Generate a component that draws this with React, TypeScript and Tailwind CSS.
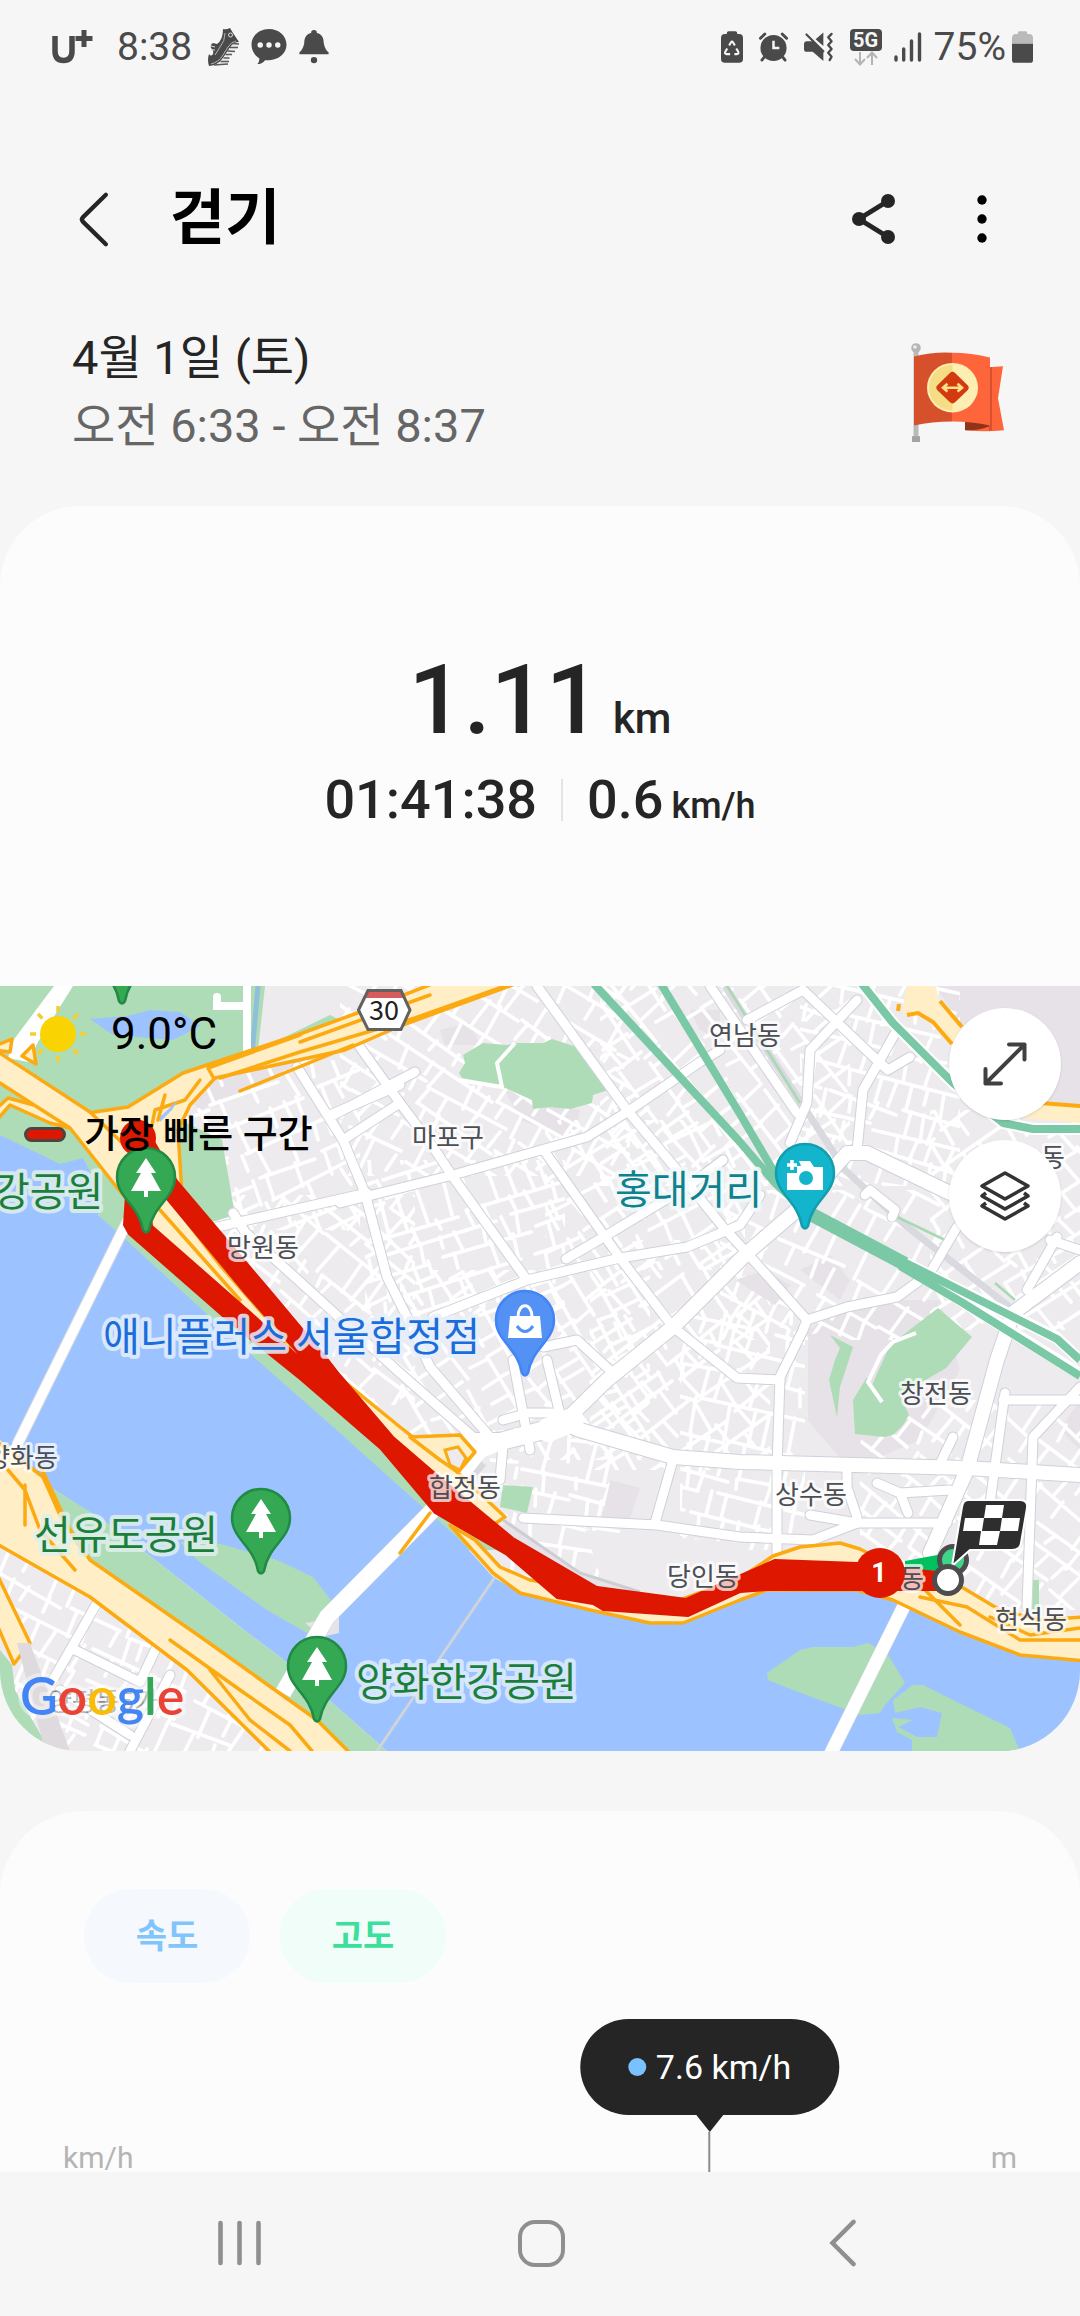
import React from "react";

const FONT = "font-[Roboto,'Noto_Sans_CJK_KR',sans-serif]";

/* ---------- status bar icons ---------- */

function ShoeIcon() {
  return (
    <svg className="h-[38px] w-[31px]" viewBox="0 0 31 38" aria-hidden="true">
      <path d="M15 1Q18 2 22 0L25 5L31 14Q24 15 21 21L15 30Q9 38 1 38Q-1 32 1 26Q3 29 5 26Q6 22 3 20Q2 16 5 15L9 16Q15 12 15 1z" fill="#4a4a4a" />
      <path d="M31 14Q32 18 28 22L21 28L20 36L3 38Q12 36 16 29L22 20Q25 14 31 14z" fill="#ededed" />
      <path d="M24 15.500L31 16M22 19.500H30M19.500 23L27 23.500M17.500 26.500H24M15.500 30H21.500M12.500 33.500H21M6 37L20 36" stroke="#5a5a5a" strokeWidth="1.500" />
      <path d="M3 36Q11 34 15 27L20 19Q23 14 28 13M17 5Q17 13 12 19L7 27" stroke="#bdbdbd" strokeWidth=".9" fill="none" />
      <circle cx="22.500" cy="7" r="2" fill="none" stroke="#dcdcdc" strokeWidth="1" />
      <path d="M3 18L7 19M3 22L7 22" stroke="#dcdcdc" strokeWidth="1" />
    </svg>
  );
}

function ChatIcon() {
  return (
    <svg className="h-[36px] w-[36px]" viewBox="0 0 36 37" aria-hidden="true">
      <path d="M18 0c10 0 18 7 18 16s-8 16-18 16c-2 0-3 0-4 0-2 3-5 4-8 4 2-2 2-4 2-6C3 27 0 22 0 16 0 7 8 0 18 0z" fill="#4a4a4a" />
      <circle cx="9" cy="16.500" r="2.800" fill="#f6f6f6" />
      <circle cx="18" cy="16.500" r="2.800" fill="#f6f6f6" />
      <circle cx="27" cy="16.500" r="2.800" fill="#f6f6f6" />
    </svg>
  );
}

function BellIcon() {
  return (
    <svg className="h-[34px] w-[30px]" viewBox="0 0 30 35" aria-hidden="true">
      <path d="M15 0c2 0 3 1 3 3 5 1 7 5 7 10 1 5 2 7 5 10v2H0v-2c3-3 4-5 5-10 0-5 2-9 7-10 0-2 1-3 3-3z" fill="#4a4a4a" />
      <circle cx="15" cy="31" r="3.300" fill="#4a4a4a" />
    </svg>
  );
}

function SaverIcon() {
  return (
    <svg className="h-[32px] w-[22px]" viewBox="0 0 23 33" aria-hidden="true">
      <path d="M8 0h7q2 0 2 3h2q4 0 4 4v22q0 4-4 4H4q-4 0-4-4V7q0-4 4-4h2q0-3 2-3z" fill="#4a4a4a" />
      <path d="M8.500 15l2-3.500q1-1.500 2 0l2 3.500M16 18l2 3.500q1 2.500-1.500 2.500H14M9.500 24H6q-2.500 0-1.500-2.500l2-3.500" fill="none" stroke="#f6f6f6" strokeWidth="2.200" />
    </svg>
  );
}

function AlarmIcon() {
  return (
    <svg className="h-[30px] w-[29px]" viewBox="0 0 30 30" aria-hidden="true">
      <circle cx="15" cy="16" r="13.500" fill="#4a4a4a" />
      <path d="M1.500 6L6 1.500M28.500 6L24 1.500M5 26l-2 2.500M25 26l2 2.500" stroke="#4a4a4a" strokeWidth="3" strokeLinecap="round" />
      <path d="M15 8.500V16h6" stroke="#f6f6f6" strokeWidth="2.600" fill="none" />
    </svg>
  );
}

function MuteIcon() {
  return (
    <svg className="h-[30px] w-[30px]" viewBox="0 0 31 30" aria-hidden="true">
      <path d="M3 9h6l11 11v9.500L9 20H3q-3 0-3-3v-5q0-3 3-3zM20 0v14l-8-7z" fill="#4a4a4a" />
      <path d="M2.500 2L20 19.500" stroke="#4a4a4a" strokeWidth="2.200" strokeLinecap="round" />
      <path d="M28.500 1.500L25 5l3.500 4-3.500 4 3.500 4-3.500 4 3.500 4-2 3.500" stroke="#4a4a4a" strokeWidth="2.400" strokeLinecap="round" strokeLinejoin="round" fill="none" />
    </svg>
  );
}

function FiveGIcon() {
  return (
    <div className="flex flex-col items-center">
      <span className="flex h-[22px] w-[32px] items-center justify-center rounded bg-[#4a4a4a] text-xl leading-none font-bold text-[#f6f6f6]">5G</span>
      <svg className="h-[15px] w-[24px]" viewBox="0 0 24 15" aria-hidden="true">
        <path d="M6 1v12M1 8l5 5.500L11 8M18 14V2M13 7l5-5.500L23 7" fill="none" stroke="#b4b4b4" strokeWidth="2" />
      </svg>
    </div>
  );
}

function SignalIcon() {
  return (
    <svg className="h-[30px] w-[28px]" viewBox="0 0 28 30" aria-hidden="true">
      <path d="M2 25v3M9.700 17v11M17.500 9v19M25.500 2v26" stroke="#4a4a4a" strokeWidth="3.400" strokeLinecap="round" />
    </svg>
  );
}

function BatteryIcon() {
  return (
    <svg className="h-[32px] w-[21px]" viewBox="0 0 22 33" aria-hidden="true">
      <path d="M7 0h8q1 0 1 3h2q4 0 4 4v6H0V7q0-4 4-4h2q0-3 1-3z" fill="#bababa" />
      <path d="M0 13h22v17q0 3-3 3H3q-3 0-3-3z" fill="#4a4a4a" />
    </svg>
  );
}

/* ---------- achievement flag ---------- */

function FlagBadge() {
  return (
    <svg className="h-[99px] w-[93px]" viewBox="0 0 93 102" preserveAspectRatio="none" aria-label="왕복 코스" role="img">
      <rect x="2.500" y="6" width="5" height="92" fill="#b9b9b9" />
      <rect x="1" y="96" width="8" height="6" fill="#a3a3a3" />
      <circle cx="5" cy="5" r="4.800" fill="#b5b5b5" />
      <circle cx="4" cy="4" r="1.800" fill="#eee" />
      <path d="M78 25l14-1-5 33 6 33q-20 2-38 0v-9h23z" fill="#ff653b" />
      <path d="M78 25h3v65l-3 1z" fill="#d8502c" />
      <path d="M54 81h24v5q-10 4-24 4z" fill="#8f3319" />
      <path d="M3 14Q22 9 41 10v71q-20 0-38 4z" fill="#d6502b" />
      <path d="M41 10q20 0 38 5v70q-18-4-38-4z" fill="#ff653b" />
      <circle cx="41.500" cy="46" r="25.500" fill="#ffeeb2" />
      <path d="M41.500 22.500a23.500 23.500 0 0 0 0 47z" fill="#f4dd84" />
      <rect x="29" y="33.500" width="25" height="25" rx="4" fill="#d33a10" transform="rotate(45 41.500 46)" />
      <path d="M33 46h17M36.500 42L32 46l4.500 4M46.500 42l4.500 4-4.500 4" stroke="#ffe08a" strokeWidth="2.600" fill="none" />
    </svg>
  );
}

/* ---------- map ---------- */

type Zone = { x: number; y: number; w: number; h: number; angle: number; seed: number };

const ZONES: Zone[] = [
  { x: 150, y: 1060, w: 210, h: 170, angle: -24, seed: 3 },
  { x: 225, y: 1195, w: 190, h: 210, angle: 40, seed: 7 },
  { x: 340, y: 986, w: 290, h: 190, angle: 32, seed: 11 },
  { x: 365, y: 1160, w: 200, h: 160, angle: -18, seed: 19 },
  { x: 400, y: 1270, w: 250, h: 190, angle: 58, seed: 23 },
  { x: 545, y: 1120, w: 200, h: 150, angle: -30, seed: 29 },
  { x: 600, y: 986, w: 250, h: 200, angle: 52, seed: 31 },
  { x: 800, y: 986, w: 160, h: 200, angle: 15, seed: 37 },
  { x: 590, y: 1240, w: 180, h: 230, angle: -35, seed: 41 },
  { x: 720, y: 1190, w: 220, h: 150, angle: 28, seed: 43 },
  { x: 680, y: 1310, w: 125, h: 240, angle: 12, seed: 47 },
  { x: 930, y: 1110, w: 150, h: 220, angle: -35, seed: 53 },
  { x: 860, y: 1400, w: 220, h: 210, angle: 38, seed: 59 },
  { x: 490, y: 1430, w: 130, h: 150, angle: 10, seed: 61 },
  { x: 0, y: 1545, w: 290, h: 206, angle: 27, seed: 67 },
];

/* Builds a net of small residential streets that fills one zone. */
function streetNet(z: Zone): string {
  let s = z.seed * 7919;
  const rand = () => {
    s = (s * 16807) % 2147483647;
    return s / 2147483647;
  };
  const a = (z.angle * Math.PI) / 180;
  const cx = z.x + z.w / 2;
  const cy = z.y + z.h / 2;
  const r = Math.hypot(z.w, z.h) / 2;
  const at = (u: number, v: number) =>
    `${Math.round(cx + u * Math.cos(a) - v * Math.sin(a))} ${Math.round(cy + u * Math.sin(a) + v * Math.cos(a))}`;
  let d = "";
  for (let v = -r; v < r; ) {
    const step = 17 + rand() * 20;
    for (let u = -r; u < r; ) {
      const len = 40 + rand() * 90;
      const tilt = (rand() - 0.5) * 14;
      d += `M${at(u, v)}L${at(u + len, v + tilt)}`;
      u += len + rand() * 20;
    }
    for (let u = -r; u < r; ) {
      u += 12 + rand() * 26;
      const part = rand() > 0.3 ? 1 : 0.6;
      d += `M${at(u, v)}L${at(u + (rand() - 0.5) * 8, v + step * part)}`;
    }
    v += step;
  }
  return d;
}

const NETS = ZONES.map((z) => ({ ...z, d: streetNet(z) }));

const ROADS = [
  "M537 986L627 1110L677 1170L723 1227L747 1253L807 1320L803 1330L780 1377L777 1467V1553",
  "M340 1203L453 1175L587 1137L627 1112L700 1062L720 1050",
  "M330 1117L390 1085L415 1072",
  "M357 1043L400 1103L433 1147L453 1177L527 1280",
  "M400 1103L343 1140L365 1193L387 1277L407 1317L430 1367L490 1437",
  "M297 1067L343 1140M330 1115L400 1085",
  "M545 1152L620 1258L673 1327L727 1370L737 1378L780 1380",
  "M433 1317L527 1280L620 1258L687 1247L740 1225L760 1195",
  "M217 1227L367 1193",
  "M233 1213L245 1232L320 1300L400 1373L473 1437",
  "M566 1259L602 1238L690 1185L723 1160",
  "M857 1000L810 1050L807 1103L790 1143",
  "M710 986L797 1113",
  "M747 1020L803 990L880 1063L888 1070L910 1057",
  "M897 1030L863 1090L857 1150",
  "M523 1518L657 1525L740 1537L813 1540L857 1523L947 1523",
  "M673 1460L655 1523",
  "M1005 1393L990 1503",
  "M1080 1387L1033 1437L1027 1607M1003 1400H1080",
  "M807 1320L847 1307L897 1297L930 1273L957 1227",
  "M1057 1237L1027 1290M1050 1240L1080 1250",
  "M513 1360L530 1450M547 1360L562 1423M543 1347L577 1340L613 1373",
  "M503 1420L528 1413H560M543 1435L503 1445L500 1480",
  "M877 1483L900 1493L950 1490M900 1493L908 1513M847 1470V1487L857 1517",
  "M953 1437L937 1470M810 1515L857 1523",
  "M97 1603L53 1680M75 1650L140 1682L160 1640M170 1675L130 1751M60 1690L130 1735",
  "M865 1195L870 1190L895 1210L892 1217",
];

const ARTERIES = [
  "M563 1423L607 1380L673 1327L747 1253L797 1210L847 1153H867L950 1193",
  "M463 1440L500 1440L563 1423L580 1430L673 1457L740 1462L780 1463L967 1468L1080 1475",
  "M1080 1263L1013 1313L997 1360L967 1470L930 1553",
];

const SMALL_LABELS: [string, number, number][] = [
  ["망원동", 263, 1257],
  ["마포구", 448, 1147],
  ["연남동", 745, 1045],
  ["동", 1053, 1167],
  ["창전동", 936, 1403],
  ["상수동", 811, 1504],
  ["당인동", 703, 1586],
  ["동", 912, 1588],
  ["현석동", 1031, 1629],
  ["합정동", 465, 1497],
  ["양화동", 22, 1467],
];

const PLACE_LABELS: [string, number, number, string, string][] = [
  ["강공원", -7, 1206, "#1b7f3b", "#e0f0ec"],
  ["애니플러스 서울합정점", 103, 1351, "#1a6ddb", "#e6effc"],
  ["홍대거리", 615, 1204, "#0f828f", "#f2fafa"],
  ["선유도공원", 34, 1549, "#1b7f3b", "#e0f0ec"],
  ["양화한강공원", 356, 1696, "#1b7f3b", "#e0edfc"],
];

function Pin({ x, y, fill, edge, children }: { x: number; y: number; fill: string; edge: string; children?: React.ReactNode }) {
  return (
    <g transform={`translate(${x} ${y})`}>
      <path d="M0-29A29 29 0 0 1 29 0C29 21 7 28 3 53Q0 58-3 53C-7 28-29 21-29 0A29 29 0 0 1 0-29z" fill={fill} stroke={edge} strokeWidth="2.500" />
      {children}
    </g>
  );
}

const TREE = "M0-19L10-4H5L15 14H2V20H-2V14H-15L-5-4H-10z";

function RouteMap() {
  return (
    <svg className="block h-[765px] w-full" viewBox="0 986 1080 765" preserveAspectRatio="xMidYMid slice" role="img" aria-label="걷기 경로 지도">
      <defs>
        {NETS.map((z) => (
          <clipPath id={`zone${z.seed}`} key={z.seed}>
            <rect x={z.x} y={z.y} width={z.w} height={z.h} />
          </clipPath>
        ))}
      </defs>
      <rect x="0" y="986" width="1080" height="765" fill="#eeebef" />
      {/* built-up blocks */}
      <g fill="#e6e2e7">
        <path d="M190 1100L240 1055L340 1035L345 1048L240 1092L200 1110z" />
        <path d="M935 986H1080V1108L1045 1103L960 1023z" />
        <path d="M440 1030L470 1022L480 1045L445 1045zM505 1090L580 1110L575 1140L520 1120z" />
        <path d="M808 1330L850 1300L940 1300L960 1370L920 1440L850 1470L808 1420z" />
        <path d="M610 1480L640 1488L628 1525L602 1518zM800 1270L830 1255L850 1280L840 1300z" />
        <path d="M1060 1430L1080 1400V1450zM690 1010L720 1010L720 1040L700 1030z" />
      </g>
      {/* residential streets */}
      <g fill="none" stroke="#fff" strokeWidth="3.600" strokeLinecap="round">
        {NETS.map((z) => (
          <path key={z.seed} d={z.d} clipPath={`url(#zone${z.seed})`} />
        ))}
      </g>
      <path d="M585 1530L740 1543L740 1570L700 1590L600 1575z" fill="#eeebef" />
      <path d="M610 1482L640 1488L628 1523L602 1518zM735 1280L765 1270L790 1285L775 1305z" fill="#e6e2e7" />
      <path d="M725 986L845 1170L905 1225L1020 1315" fill="none" stroke="#d9d9e0" strokeWidth="7" />
      <path d="M727 986L800 1103M897 1217L945 1240M995 1283L1015 1300" fill="none" stroke="#a9d9b2" strokeWidth="2.500" />
      {/* parks */}
      <path d="M808 1335L832 1330L850 1345L905 1345L870 1420L855 1455L815 1430z" fill="#e6e2e7" />
      <g fill="#aedcb6">
        <path d="M0 986H265L258 1050L330 1015L340 1020L240 1060L100 1125L60 1170L0 1140z" />
        <path d="M180 1120L222 1140L235 1215L205 1224L180 1195z" />
        <path d="M463 1055L483 1043L507 1045L517 1043H543L552 1039L580 1048L608 1090L593 1095L592 1103L570 1109L550 1107L533 1109L532 1100L503 1087L463 1080L459 1073L465 1063z" />
        <path d="M938 1308L972 1337L946 1368L900 1395L909 1415L903 1425L893 1435L884 1437L855 1434L853 1400L867 1377L872 1385L890 1345z" />
        <path d="M830 1335L853 1347L840 1387L837 1417L829 1380L835 1360L840 1348z" />
        <path d="M503 1485L533 1487L527 1513L500 1507zM1033 1580H1039V1610H1032z" />
      </g>
      <path d="M460 1080L502 1087L497 1063L515 1043" fill="none" stroke="#fff" strokeWidth="4" />
      <path d="M882 1402L868 1382L881 1355L893 1342L916 1333" fill="none" stroke="#fff" strokeWidth="4" />
      <path d="M90 1019L127 1016L150 1010L180 1012L200 1026L173 1040L113 1035z" fill="#9cc3ff" />
      <path d="M258 986L252 1055" stroke="#8fc0d8" strokeWidth="5" />
      <path d="M247 986V1053M217 997V1006H247" fill="none" stroke="#fff" strokeWidth="8" strokeLinecap="round" />
      <path d="M54 986H73L38 1042L28 1062L8 1058L12 1042z" fill="#fff" />
      {/* main roads */}
      <g fill="none" strokeLinecap="round" strokeLinejoin="round">
        <g stroke="#cfd1da" strokeWidth="11">
          {ROADS.map((d) => <path key={d} d={d} />)}
        </g>
        <g stroke="#cfd1da" strokeWidth="16">
          {ARTERIES.map((d) => <path key={d} d={d} />)}
        </g>
        <g stroke="#fff" strokeWidth="9">
          {ROADS.map((d) => <path key={d} d={d} />)}
        </g>
        <g stroke="#fff" strokeWidth="14">
          {ARTERIES.map((d) => <path key={d} d={d} />)}
        </g>
        <path d="M548 1430L572 1420" stroke="#fff" strokeWidth="24" />
      </g>
      {/* river with its banks */}
      <path d="M0 1100L60 1110L110 1180L240 1290L440 1470L500 1550L460 1550L340 1440L120 1240L60 1170L0 1140z" fill="#aedcb6" />
      <path d="M0 1135L60 1164L83 1158L100 1190L98 1215L123 1237L257 1360L340 1433L400 1487L457 1537L493 1577L520 1593L590 1610L650 1623H683L740 1600L767 1592L857 1590L893 1600L1020 1655L1080 1662V1751H387L280 1657L253 1637L113 1527L50 1487L0 1440z" fill="#9cc3ff" />
      <path d="M50 1487L82 1507L113 1527L253 1637L280 1657L387 1751H330L90 1570z" fill="#aedcb6" />
      <g fill="#aedcb6">
        <path d="M180 1542H213L277 1560L313 1577L333 1603L320 1628L307 1633L267 1610L197 1560z" />
        <path d="M767 1673L800 1650L813 1647H853L868 1643L887 1653L905 1683L885 1705L880 1713L860 1715L793 1690L768 1680z" />
        <path d="M913 1685H923L957 1702L1010 1728L1020 1751H912V1740L897 1732L892 1718L913 1720L898 1727L917 1737L937 1737L942 1713L920 1707L895 1713L893 1700z" />
        <path d="M0 1650L12 1665L15 1690L50 1751H0z" />
      </g>
      <path d="M495 1577L377 1751" stroke="#cfd3da" strokeWidth="3" />
      <path d="M305 1623L339 1617V1633L322 1637z" fill="#e6e2e7" />
      {/* bridges */}
      <g fill="none" stroke="#d6d8e0" strokeLinejoin="round">
        <path d="M128 1220L17 1445" strokeWidth="12" />
        <path d="M480 1460L430 1513L327 1617L283 1693" strokeWidth="17" />
        <path d="M907 1600L830 1755" strokeWidth="14" />
      </g>
      <g fill="none" stroke="#fff" strokeLinejoin="round">
        <path d="M128 1220L17 1445L0 1490" strokeWidth="10" />
        <path d="M520 1435L480 1450L430 1513L327 1617L283 1693" strokeWidth="16" />
        <path d="M907 1600L830 1755" strokeWidth="13" />
      </g>
      {/* expressways */}
      <g stroke="#fbab11" fill="#ffeec6" strokeWidth="3.500" strokeLinejoin="round">
        <path d="M-5 1046L12 1039L10 1052L-5 1050zM33 1045L36 1064L22 1056z" />
        <path d="M-5 1110L8 1098L45 1108L70 1128L50 1123L10 1105L-5 1122z" />
        <path d="M-5 1440L43 1477L60 1515L90 1560L205 1640L317 1720L352 1755H273L187 1670L90 1597L-5 1543z" />
        <path d="M-5 1570L30 1643L14 1664L-5 1620z" />
        <path d="M88 1113L128 1107L183 1073L243 1053L297 1035L360 1012L432 984L515 984L400 1026L345 1050L215 1078L190 1105L178 1130L182 1195L160 1180L150 1135L120 1150z" />
        <path d="M-5 1050L90 1112L135 1155L220 1265L290 1345L340 1378L400 1427L455 1470L505 1517L490 1527L440 1480L340 1410L240 1310L150 1228L115 1185L70 1128L-5 1080z" />
        <path d="M450 1525L475 1540L500 1567L530 1580L590 1590L680 1600L740 1578L773 1556L800 1547L840 1543L860 1549L900 1570L950 1580L1000 1610L1040 1620L1085 1617V1661L1020 1655L960 1632L893 1600L857 1590H767L740 1600L683 1623H650L590 1610L520 1593L493 1573z" />
        <path d="M410 1437L460 1435L475 1452L458 1472L440 1460z" />
      </g>
      <g fill="none" stroke="#fbab11" strokeWidth="3.500" strokeLinejoin="round" strokeLinecap="round">
        <path d="M240 1091L353 1045M213 1077L208 1068L300 1035M220 1078L300 1052L415 1018L505 986M300 1042L430 995" />
        <path d="M150 1135L155 1110L185 1100L200 1080M158 1120L165 1095" />
        <path d="M170 1640L240 1690L290 1725L312 1751M210 1670L250 1720L290 1751M8 1470L25 1490L40 1530L75 1570M25 1485V1525M40 1465L70 1530L85 1555" />
        <path d="M920 1597L967 1607L1020 1640L1080 1640M925 1590L960 1625M990 1617L1030 1635L1080 1628" />
        <path d="M430 1513L400 1553" />
        <path d="M160 1210L200 1255L240 1300" />
      </g>
      <path d="M445 1450L458 1447L466 1458L460 1470L450 1465z" fill="#eeebef" stroke="#fbab11" strokeWidth="3" />
      <path d="M160 1117L178 1100L172 1110L160 1122z" fill="#9cc3ff" />
      <path d="M510 1522L580 1573L640 1592L597 1592L513 1542L498 1527z" fill="#e6e2e7" />
      <path d="M503 1520L580 1573L640 1592" fill="none" stroke="#cdced4" strokeWidth="3" />
      <path d="M907 984H935L940 1003L962 1025L952 1045L933 1023L917 1013L902 1013z" fill="#ffeec6" />
      <path d="M940 1001L962 1027M907 1015L918 1013L933 1022L952 1044M899 1004L898 1011" fill="none" stroke="#fbab11" strokeWidth="4" />
      <path d="M1030 1103L1080 1106V1123L1010 1117z" fill="#ffeec6" />
      <path d="M1040 1103L1080 1106" stroke="#fbab11" strokeWidth="4" />
      <path d="M17 1643L30 1643L70 1751H45z" fill="#dedade" />
      {/* rail lines */}
      <g fill="none" stroke="#fff" strokeLinejoin="round">
        <path d="M862 984L893 1023L953 1083L1003 1123L1033 1129H1080M905 1266L1080 1374M905 1263L1057 1338L1080 1360" strokeWidth="12" />
      </g>
      <g fill="none" stroke="#7bc8a7" strokeLinejoin="round">
        <path d="M594 984L740 1142L775 1183L808 1213M661 984L740 1114L777 1177L808 1213" strokeWidth="8" />
        <path d="M805 1211L905 1264" strokeWidth="14" />
        <path d="M900 1260L1057 1339L1080 1360M900 1266L963 1303L1080 1376M862 984L893 1023L953 1083L1003 1123L1033 1129H1080" strokeWidth="8" />
      </g>
      {/* walked route */}
      <circle cx="138" cy="1138" r="18" fill="#dd1700" />
      <path d="M905 1561L948 1553V1573H905z" fill="#00c060" />
      <path
        fillRule="evenodd"
        fill="#dd1700"
        stroke="#dd1700"
        strokeWidth="2"
        strokeLinejoin="round"
        d="M126 1195L124 1225L129 1234L233 1325L300 1379L381 1449L435 1513L507 1555L557 1598L593 1604L603 1610L688 1616L740 1592L767 1590H945V1573L857 1563L775 1560L686 1599L597 1587L513 1538L443 1480L393 1437L340 1375L329 1361L267 1287L177 1181L143 1123zM146 1180L167 1199L245 1293L311 1368L250 1312L152 1226z"
      />
      {/* district names */}
      <g fontFamily="'Noto Sans CJK KR', sans-serif" fontSize="26" fill="#4b4e54" stroke="#fff" strokeOpacity=".72" strokeWidth="6" strokeLinejoin="round" paintOrder="stroke" textAnchor="middle">
        {SMALL_LABELS.map(([t, x, y]) => (
          <text key={`${t}${x}`} x={x} y={y}>{t}</text>
        ))}
        <text x="103" y="1711" opacity=".6">양평동5가</text>
      </g>
      {/* place names */}
      <g fontFamily="'Noto Sans CJK KR', sans-serif" fontSize="40" strokeWidth="8" strokeOpacity=".85" strokeLinejoin="round" paintOrder="stroke">
        {PLACE_LABELS.map(([t, x, y, fill, halo]) => (
          <text key={t} x={x} y={y} fill={fill} stroke={halo}>{t}</text>
        ))}
      </g>
      {/* road shield */}
      <path d="M358.500 1010L368 990.500H401L410 1010L401 1029.500H368z" fill="#fff" />
      <path d="M367 991H402L405 998H364z" fill="#d95c5c" />
      <path d="M358.500 1010L368 990.500H401L410 1010L401 1029.500H368z" fill="none" stroke="#62625f" strokeWidth="3" />
      <text x="384" y="1020" textAnchor="middle" fontFamily="'Noto Sans CJK KR', sans-serif" fontSize="27" fill="#222">30</text>
      {/* pins */}
      <Pin x={122} y={948} fill="#34a853" edge="#218a44" />
      {[[146, 1177], [261, 1518], [317, 1666]].map(([x, y]) => (
        <Pin key={x} x={x} y={y} fill="#34a853" edge="#218a44">
          <path d={TREE} fill="#fff" />
        </Pin>
      ))}
      <Pin x={525} y={1320} fill="#5391f5" edge="#4285f4">
        <path d="M-15-4H15L17 18H-17z" fill="#fff" />
        <path d="M-7-3C-7-18 7-18 7-3" fill="none" stroke="#fff" strokeWidth="3" />
        <path d="M-8 6Q0 17 8 6" fill="none" stroke="#5391f5" strokeWidth="3" />
      </Pin>
      <Pin x={805} y={1173} fill="#12b5cb" edge="#129eaf">
        <path d="M-18 0H-8V-7H-4L-6-12H5L9-6H18V17H-18z" fill="#fff" />
        <circle cx="1" cy="5" r="7" fill="#12b5cb" />
        <path d="M-13-13V-3M-18-8H-8" stroke="#fff" strokeWidth="3.500" />
      </Pin>
      {/* route markers */}
      <circle cx="880" cy="1573" r="25" fill="#dd1700" />
      <text x="879" y="1582" textAnchor="middle" fontFamily="Roboto, sans-serif" fontSize="27" fontWeight="700" fill="#fff">1</text>
      <circle cx="953" cy="1560" r="13.500" fill="#3fd48a" stroke="#4d4d4d" strokeWidth="5" />
      <path d="M968 1500H1020Q1028 1500 1027 1508L1021 1543Q1020 1550 1012 1550H970L952 1566L962 1507Q963 1500 968 1500z" fill="#2e2e2e" stroke="#fff" strokeWidth="2" />
      <path d="M986 1505H1004L1002 1518H984zM965 1518H984L982 1531H963zM1002 1518H1020L1018 1531H1000zM981 1531H1000L997 1545H979z" fill="#fff" />
      <circle cx="948" cy="1580" r="13.500" fill="#fff" stroke="#4d4d4d" strokeWidth="5" />
      {/* attribution */}
      <text x="20" y="1715" fontFamily="Lato, sans-serif" fontSize="52" fontWeight="600" stroke="#fff" strokeOpacity=".4" strokeWidth="8" strokeLinejoin="round" paintOrder="stroke">
        <tspan fill="#4285f4">G</tspan>
        <tspan fill="#ea4335">o</tspan>
        <tspan fill="#fbbc05">o</tspan>
        <tspan fill="#4285f4">g</tspan>
        <tspan fill="#34a853">l</tspan>
        <tspan fill="#ea4335">e</tspan>
      </text>
    </svg>
  );
}

function SunIcon() {
  return (
    <svg className="h-[56px] w-[56px]" viewBox="-28 -28 56 56" aria-hidden="true">
      <circle r="18" fill="#fad402" />
      <path d="M0-22V-28M0 22V28M22 0H28M-22 0H-28M15.500-15.500L20-20M-15.500-15.500L-20-20M15.500 15.500L20 20M-15.500 15.500L-20 20" stroke="#f2cf35" strokeWidth="3.500" />
    </svg>
  );
}

function MapButton({ label, children }: { label: string; children: React.ReactNode }) {
  return (
    <button type="button" aria-label={label} className="flex size-28 items-center justify-center rounded-full bg-white shadow-sm">
      {children}
    </button>
  );
}

/* ---------- page ---------- */

export default function App() {
  return (
    <div className={`flex min-h-screen flex-col bg-[#f6f6f6] text-[#252525] ${FONT}`}>
      <div className="flex h-[94px] items-center justify-between pr-[47px] pl-[51px] text-[#4a4a4a]">
        <div className="flex items-center">
          <svg className="h-[34px] w-[42px]" viewBox="0 0 42 34" aria-label="U+" role="img">
            <path d="M4 6V21Q4 30.500 12.500 30.500T21 21V6" fill="none" stroke="#4a4a4a" strokeWidth="5.500" />
            <path d="M33 0V17M24.500 8.500H41.500" stroke="#4a4a4a" strokeWidth="5" />
          </svg>
          <span className="mr-4 ml-6 text-[39px] leading-none">8:38</span>
          <div className="flex items-center gap-3">
            <ShoeIcon />
            <ChatIcon />
            <BellIcon />
          </div>
        </div>
        <div className="flex items-center">
          <div className="flex items-center gap-4">
            <SaverIcon />
            <AlarmIcon />
            <MuteIcon />
            <FiveGIcon />
          </div>
          <span className="ml-3"><SignalIcon /></span>
          <span className="mr-1.5 ml-3 text-[39px] leading-none">75%</span>
          <BatteryIcon />
        </div>
      </div>

      <header className="mt-16 flex h-[122px] items-center pr-[68px] pl-[64px]">
        <button type="button" aria-label="뒤로" className="flex size-[60px] items-center justify-center">
          <svg className="h-[57px] w-[34px]" viewBox="0 0 34 60" aria-hidden="true">
            <path d="M29.500 4L5.500 27.500Q3 30 5.500 32.500L29.500 56" fill="none" stroke="#252525" strokeWidth="4.500" strokeLinecap="round" />
          </svg>
        </button>
        <h1 className="ml-[46px] flex-1 text-[60px] leading-none font-bold text-black">걷기</h1>
        <button type="button" aria-label="공유" className="flex size-[60px] items-center justify-center">
          <svg className="h-[50px] w-[44px]" viewBox="0 0 44 50" aria-hidden="true">
            <path d="M36 7L7 25L36 43" fill="none" stroke="#252525" strokeWidth="5" />
            <circle cx="36" cy="7" r="7" fill="#252525" />
            <circle cx="7" cy="25" r="7" fill="#252525" />
            <circle cx="36" cy="43" r="7" fill="#252525" />
          </svg>
        </button>
        <button type="button" aria-label="더보기" className="ml-[48px] flex size-[60px] items-center justify-center">
          <svg className="h-[48px] w-[10px]" viewBox="0 0 10 48" aria-hidden="true">
            <circle cx="5" cy="5" r="4.700" />
            <circle cx="5" cy="24" r="4.700" />
            <circle cx="5" cy="43" r="4.700" />
          </svg>
        </button>
      </header>

      <section className="mt-11 flex items-center justify-between pr-[76px] pl-[72px]">
        <div className="text-[47px] leading-[68px]">
          <p>4월 1일 (토)</p>
          <p className="text-[#666]">오전 6:33 - 오전 8:37</p>
        </div>
        <FlagBadge />
      </section>

      <section className="mt-[46px] overflow-hidden rounded-[80px] bg-[#fcfcfc]">
        <div className="flex flex-col items-center pt-[142px] pb-[154px] font-medium">
          <p className="flex items-baseline gap-3 text-[97px] leading-[104px]">
            1.11 <span className="text-[42px] leading-none">km</span>
          </p>
          <div className="mt-4 flex h-16 items-center gap-6">
            <p className="text-[54px] leading-[64px]">01:41:38</p>
            <span className="h-[42px] w-0.5 bg-[#e4e4e4]" />
            <p className="flex items-baseline gap-2 text-[54px] leading-[64px]">
              0.6 <span className="text-[36px] leading-none">km/h</span>
            </p>
          </div>
        </div>

        <div className="relative">
          <RouteMap />
          <p className="absolute top-5 left-[30px] flex items-center gap-[25px] text-[44px] leading-[56px] text-black">
            <SunIcon /> 9.0°C
          </p>
          <div className="absolute top-[120px] left-6 flex items-center gap-[18px]">
            <span className="h-[15px] w-[42px] rounded-full border-[3px] border-[#4d4440] bg-[#dd1700]" />
            <p className="text-[38px] leading-[56px] font-medium text-black">가장 빠른 구간</p>
          </div>
          <div className="absolute top-[22px] right-[19px] flex flex-col gap-5">
            <MapButton label="지도 확대">
              <svg className="size-[46px]" viewBox="0 0 46 46" aria-hidden="true">
                <path d="M3.500 42.500L42.500 3.500M27 3.500H42.500V18.500M3.500 28V42.500H19" fill="none" stroke="#404040" strokeWidth="4" strokeLinecap="round" strokeLinejoin="round" />
              </svg>
            </MapButton>
            <MapButton label="지도 유형">
              <svg className="size-[50px]" viewBox="0 0 50 50" aria-hidden="true">
                <path d="M25 2L48 15L25 28L2 15zM6 22L2 25L25 38L48 25L44 22M6 32L2 35L25 48L48 35L44 32" fill="none" stroke="#333" strokeWidth="3.500" strokeLinejoin="round" />
              </svg>
            </MapButton>
          </div>
        </div>
      </section>

      <section className="mt-[60px] flex flex-1 flex-col rounded-t-[84px] bg-[#fcfcfc] pt-[78px]">
        <div className="flex gap-[30px] px-[84px] text-[34px] font-bold">
          <button type="button" className="h-[94px] w-[166px] rounded-full bg-[#f5f9fd] text-[#82c5fd]">속도</button>
          <button type="button" className="h-[94px] w-[166px] rounded-full bg-[#f1fdf9] text-[#3ddf9d]">고도</button>
        </div>
        <div className="relative flex flex-1 items-end justify-between px-[63px] text-[30px] leading-7 text-[#b4b4b4]">
          <span>km/h</span>
          <span>m</span>
          <div className="absolute top-9 bottom-0 left-[65.700%] flex -translate-x-1/2 flex-col items-center">
            <div className="flex h-24 items-center gap-2.5 rounded-full bg-[#252525] px-12 text-[34px] text-white">
              <span className="size-[18px] rounded-full bg-[#7ac2ff]" />
              <span>7.6 km/h</span>
            </div>
            <svg className="h-[17px] w-[27px]" viewBox="0 0 27 18" preserveAspectRatio="none" aria-hidden="true">
              <path d="M0 0H27L13.500 18z" fill="#252525" />
            </svg>
            <span className="w-0.5 flex-1 bg-[#8c8c8c]" />
          </div>
        </div>
      </section>

      <nav className="flex h-36 items-center justify-center gap-[242px] pb-0.5 pl-0.5">
        <button type="button" aria-label="최근 앱" className="flex w-[60px] justify-center">
          <svg className="h-[46px] w-[43px]" viewBox="0 0 43 46" aria-hidden="true">
            <path d="M2.500 3V43M21.500 3V43M40.500 3V43" stroke="#8f8f8f" strokeWidth="4.600" strokeLinecap="round" />
          </svg>
        </button>
        <button type="button" aria-label="홈" className="flex w-[60px] justify-center">
          <span className="size-[47px] rounded-[17px] border-[4px] border-[#8f8f8f]" />
        </button>
        <button type="button" aria-label="뒤로 가기" className="flex w-[60px] justify-center">
          <svg className="h-[48px] w-[28px]" viewBox="0 0 28 50" aria-hidden="true">
            <path d="M25 3L3 25L25 47" fill="none" stroke="#8f8f8f" strokeWidth="4.600" strokeLinecap="round" />
          </svg>
        </button>
      </nav>
    </div>
  );
}
